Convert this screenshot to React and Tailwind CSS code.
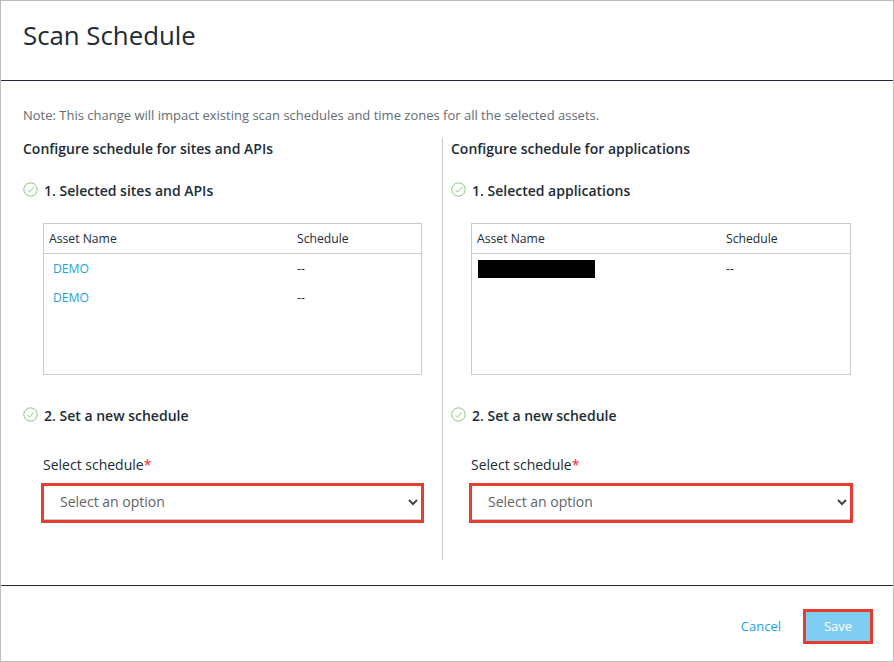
import React from 'react';

const CheckCircle = () => (
  <svg width="15" height="15" viewBox="0 0 15 15" fill="none" className="shrink-0 mt-[-2px]">
    <circle cx="7.5" cy="7.5" r="6.7" stroke="#8cc47a" strokeWidth="1" />
    <path d="M4.3 7.8l2.3 2.3 4.2-4.8" stroke="#8cc47a" strokeWidth="1" />
  </svg>
);

const StepTitle = ({ children }) => (
  <div className="flex items-center gap-[6px] h-[20px] text-[14px] font-semibold text-[#212b36]">
    <CheckCircle />
    <span>{children}</span>
  </div>
);

const AssetTable = ({ rows, wide }) => (
  <div className={`ml-[20px] h-[152px] border border-[#c8ccd0] text-[12.2px] ${wide ? 'w-[380px]' : 'w-[379px]'}`}>
    <div className="flex items-center h-[30px] pt-[1px] border-b border-[#c8ccd0] text-[#212b36]">
      <div className={`pl-[5px] ${wide ? 'w-[254px]' : 'w-[253px]'}`}>Asset Name</div>
      <div>Schedule</div>
    </div>
    {rows.map((row, i) => (
      <div key={i} className="flex items-center h-[29px] pt-[1px]">
        <div className={`pl-[9px] ${wide ? 'w-[254px]' : 'w-[253px]'}`}>
          {row.redacted ? (
            <div className="ml-[-3px] mt-[-1px] w-[117px] h-[18px] bg-black" />
          ) : (
            <a className="text-[#1ba1e2]">{row.name}</a>
          )}
        </div>
        <div className="text-[#212b36]">--</div>
      </div>
    ))}
  </div>
);

const ScheduleSelect = ({ wide }) => (
  <div className={`ml-[18px] mt-[9px] h-[40px] border-[3px] border-[#e53e30] bg-white ${wide ? 'w-[384px]' : 'w-[383px]'}`}>
    <div className="h-full border-b border-[#c8ccd0] flex items-center justify-between pl-[16px] pr-[2px] pb-[2px]">
      <span className="text-[14px] text-[#5f6368]">Select an option</span>
      <svg width="12" height="12" viewBox="0 0 12 12" fill="none">
        <path d="M2 4l4 4 4-4" stroke="#444" strokeWidth="2" />
      </svg>
    </div>
  </div>
);

const Column = ({ title, step1, rows, wide }) => (
  <div className="flex flex-col">
    <div className="h-[20px] flex items-center text-[14px] font-semibold text-[#212b36]">{title}</div>
    <div className="mt-[22px]"><StepTitle>{step1}</StepTitle></div>
    <div className="mt-[23px]"><AssetTable rows={rows} wide={wide} /></div>
    <div className="mt-[30px]"><StepTitle>2. Set a new schedule</StepTitle></div>
    <div className="mt-[29px] ml-[20px] h-[20px] flex items-center text-[14px] text-[#212b36]">
      Select schedule<span className="text-[#ff2020]">*</span>
    </div>
    <ScheduleSelect wide={wide} />
  </div>
);

export default function App() {
  return (
    <div className="w-[894px] h-[662px] flex flex-col bg-white border border-[#bdbdbd] font-['Open_Sans',sans-serif]">
      <div className="h-[80px] shrink-0 border-b border-[#212b36] pl-[22px] pt-[17px] text-[25.8px] leading-[34px] font-medium text-[#212b36]">
        Scan Schedule
      </div>
      <div className="flex-1 flex flex-col pl-[22px] pt-[26px]">
        <div className="h-[18px] flex items-center text-[13px] text-[#646c75]">
          Note: This change will impact existing scan schedules and time zones for all the selected assets.
        </div>
        <div className="flex mt-[13px]">
          <div className="w-[420px] border-r border-[#c8c8c8] h-[422px] shrink-0">
            <Column
              title="Configure schedule for sites and APIs"
              step1="1. Selected sites and APIs"
              rows={[{ name: 'DEMO' }, { name: 'DEMO' }]}
            />
          </div>
          <div className="pl-[8px]">
            <Column
              title="Configure schedule for applications"
              step1="1. Selected applications"
              rows={[{ redacted: true }]}
              wide
            />
          </div>
        </div>
      </div>
      <div className="h-[76px] shrink-0 border-t border-[#212b36] flex items-center justify-end gap-[22px] pr-[20px] pt-[6px]">
        <a className="text-[13px] text-[#1ba1e2]">Cancel</a>
        <button className="w-[70px] h-[35px] border-[3px] border-[#e53e30] bg-[#7fcdf0] text-white text-[13px] font-medium">
          Save
        </button>
      </div>
    </div>
  );
}
